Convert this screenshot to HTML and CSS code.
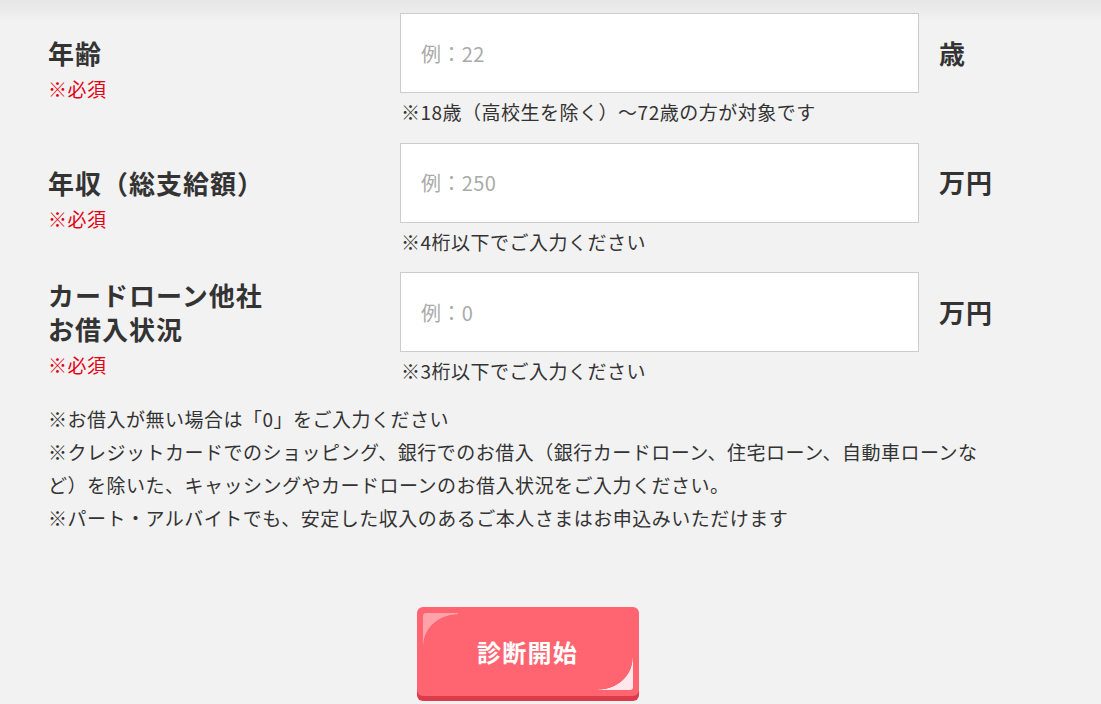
FILE: index.html
```html
<!DOCTYPE html>
<html lang="ja">
<head>
  <meta charset="UTF-8" />
  <meta name="viewport" content="width=device-width, initial-scale=1.0" />
  <title>診断フォーム</title>
  <link rel="stylesheet" href="styles.css">
</head>

<body>
  <main class="form">
    <div class="field">
      <div class="field-label">
        <p class="field-title">年齢</p>
        <p class="field-req">※必須</p>
      </div>
      <div class="field-body">
        <input type="text" placeholder="例：22" />
        <p class="field-note">※18歳（高校生を除く）〜72歳の方が対象です</p>
      </div>
      <div class="field-unit">歳</div>
    </div>

    <div class="field">
      <div class="field-label">
        <p class="field-title">年収（総支給額）</p>
        <p class="field-req">※必須</p>
      </div>
      <div class="field-body">
        <input type="text" placeholder="例：250" />
        <p class="field-note">※4桁以下でご入力ください</p>
      </div>
      <div class="field-unit">万円</div>
    </div>

    <div class="field">
      <div class="field-label two-lines">
        <p class="field-title">カードローン他社<br>お借入状況</p>
        <p class="field-req">※必須</p>
      </div>
      <div class="field-body">
        <input type="text" placeholder="例：0" />
        <p class="field-note">※3桁以下でご入力ください</p>
      </div>
      <div class="field-unit">万円</div>
    </div>

    <div class="notes">
      <p>※お借入が無い場合は「0」をご入力ください</p>
      <p>※クレジットカードでのショッピング、銀行でのお借入（銀行カードローン、住宅ローン、自動車ローンなど）を除いた、キャッシングやカードローンのお借入状況をご入力ください。</p>
      <p>※パート・アルバイトでも、安定した収入のあるご本人さまはお申込みいただけます</p>
    </div>

    <div class="actions">
      <button class="start" type="button">診断開始</button>
    </div>
  </main>
</body>
</html>
```

FILE: styles.css
```css
:root {
  --text: #333;
  --bg: #f2f2f2;
  --red: #e50012;
  --btn: #ff6471;
  --btn-dark: #dc3b49;
}

* {
  box-sizing: border-box;
}

html {
  background: var(--bg);
}

body {
  margin: 0;
  min-height: 100vh;
  font-family: "Noto Sans CJK JP", "Noto Sans", sans-serif;
  color: var(--text);
  background: linear-gradient(to bottom, #e6e6e6 0, var(--bg) 22px) no-repeat var(--bg);
}

p {
  margin: 0;
}

.form {
  width: 1007px;
  padding: 13px 0 0 48px;
  font-size: 19px;
  letter-spacing: 0.5px;
}

.field {
  display: grid;
  grid-template-columns: 352px 519px auto;
  align-items: start;
  margin-bottom: 14.5px;
}

.field-label {
  padding-top: 23px;
}

.field-label.two-lines {
  padding-top: 6px;
}

.field-title {
  font-size: 26px;
  font-weight: 700;
  line-height: 34px;
  letter-spacing: 1px;
}

.field-req {
  margin-top: 4px;
  line-height: 30px;
  color: var(--red);
}

.field-body input {
  display: block;
  width: 519px;
  height: 80px;
  padding: 0 20px;
  border: 1px solid #ccc;
  border-radius: 0;
  background: #fff;
  font-family: inherit;
  font-size: 20px;
  letter-spacing: 0.4px;
  color: var(--text);
}

.field-body input::placeholder {
  color: #aaa;
}

.field-note {
  margin-top: 2px;
  line-height: 33px;
  padding-left: 1px;
}

.field-unit {
  display: flex;
  align-items: center;
  height: 78px;
  padding-left: 20px;
  font-size: 26px;
  font-weight: 700;
  letter-spacing: 1px;
}

.notes {
  line-height: 33px;
}

.actions {
  display: flex;
  justify-content: center;
  margin-top: 73.5px;
}

.start {
  position: relative;
  width: 222px;
  height: 89px;
  border: none;
  border-radius: 6px;
  background: var(--btn);
  box-shadow: 0 5px 0 var(--btn-dark);
  color: #fff;
  font-family: inherit;
  font-size: 24px;
  font-weight: 700;
  letter-spacing: 0.05em;
  cursor: pointer;
  overflow: hidden;
}

.start::before,
.start::after {
  content: "";
  position: absolute;
  width: 35px;
  height: 32px;
}

.start::before {
  top: 6px;
  left: 6px;
  border-top-left-radius: 3px;
  background: radial-gradient(35px 31px at 100% 100%, transparent 98%, #ffa2aa 100%);
}

.start::after {
  right: 6px;
  bottom: 6px;
  border-bottom-right-radius: 3px;
  background: radial-gradient(35px 32px at 0 0, transparent 98%, #ffe7eb 100%);
}
```
